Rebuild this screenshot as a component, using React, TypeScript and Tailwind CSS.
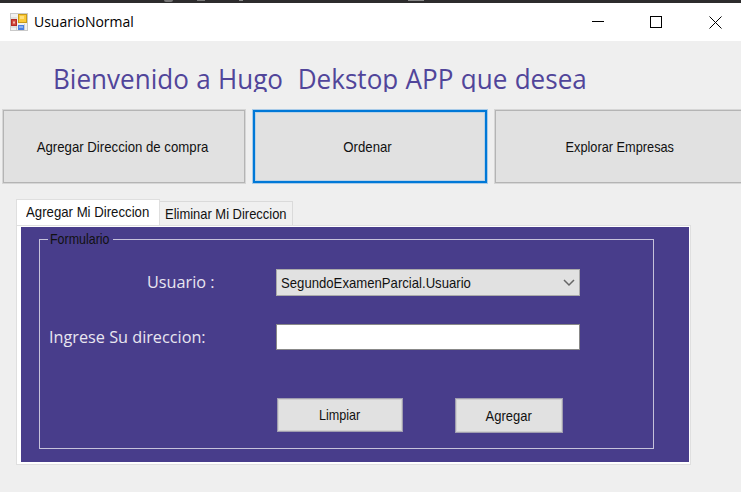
import type { ReactNode } from "react";

const sans = "font-['Liberation_Sans',sans-serif]";
const humanist = "font-['Open_Sans','Noto_Sans',sans-serif]";

function Button({ className, text, children }: { className: string; text: string; children: ReactNode }) {
  return (
    <button className={`flex shrink-0 items-center justify-center bg-[#e1e1e1] text-[15px] leading-[18px] text-[#111] ${sans} ${className}`}>
      <span className={`block whitespace-nowrap ${text}`}>{children}</span>
    </button>
  );
}

function FormIcon() {
  return (
    <svg width="18" height="18" viewBox="0 0 18 18" className="shrink-0">
      <rect x="0.5" y="0.5" width="17" height="17" fill="#f1f1f1" stroke="#c9c9c9" />
      <path d="M1 5h6M6.5 11v6M14.5 11v6M1 14h5" stroke="#cfcfcf" />
      <rect x="1" y="6" width="6" height="7" fill="#b52a24" />
      <rect x="2" y="7" width="4" height="5" fill="#cf463c" />
      <rect x="3" y="8.5" width="2" height="2" fill="#f3b5aa" />
      <rect x="8" y="1" width="9" height="9" fill="#c79a18" />
      <rect x="9" y="2" width="7" height="7" fill="#fbc938" />
      <rect x="10" y="3" width="4" height="3" fill="#ffe07a" />
      <rect x="8" y="12" width="6" height="5" fill="#4a7fe0" />
      <rect x="9" y="13" width="4" height="2" fill="#86b0f5" />
    </svg>
  );
}

function TitleBar() {
  return (
    <header className="flex h-[38px] items-center bg-white pl-[10px]">
      <FormIcon />
      <span className={`ml-[6px] w-[110px] origin-left scale-x-[0.965] whitespace-nowrap text-[14.5px] leading-5 text-black ${humanist}`}>UsuarioNormal</span>
      <svg width="131" height="14" viewBox="0 0 131 14" className="ml-auto mr-[19px]" fill="none" stroke="#000" shapeRendering="crispEdges">
        <path d="M1 6.5h12" />
        <rect x="59.5" y="1.5" width="11" height="11" />
        <path d="M118.5 1.5l12 12M130.5 1.5l-12 12" shapeRendering="auto" />
      </svg>
    </header>
  );
}

export default function App() {
  return (
    <div className="flex h-[492px] w-[741px] flex-col overflow-hidden bg-[#efefef]">
      <div className="flex h-[3px] items-start bg-[#2d2c2d]">
        <span className="ml-[164px] h-[2px] w-[9px] rounded-b-full bg-[#777]" />
        <span className="ml-[24px] h-px w-[8px] bg-[#777]" />
        <span className="ml-[34px] h-px w-[4px] bg-[#888]" />
        <span className="ml-[165px] h-px w-[16px] bg-[#888]" />
      </div>
      <TitleBar />
      <main className="flex flex-1 flex-col">
        <h1 className={`ml-[53px] mt-[16px] h-[35px] w-[660px] origin-left scale-x-[0.965] overflow-hidden whitespace-pre text-[27px] leading-[43px] text-[#51459a] [word-spacing:0.6px] ${humanist}`}>
          Bienvenido a Hugo  Dekstop APP que desea
        </h1>
        <div className="mt-[18px] flex gap-[8px] pl-[3px]">
          <Button className="h-[73px] w-[242px] border border-[#b4b4b4] pr-[3px] shadow-[0_0_0_1px_#d6d6d6]" text="scale-x-[0.88]">Agregar Direccion de compra</Button>
          <Button className="h-[73px] w-[234px] border-2 border-[#0078d7] pr-[4px] shadow-[0_0_0_1px_#a9cbe8,inset_0_0_0_1px_#b9d2e6]" text="scale-x-[0.88]">Ordenar</Button>
          <Button className="h-[73px] w-[250px] border border-[#b4b4b4] pr-px shadow-[0_0_0_1px_#d6d6d6]" text="scale-x-[0.85]">Explorar Empresas</Button>
        </div>
        <div className={`mt-[16px] flex h-[26px] items-end pl-[16px] text-[15px] leading-[18px] text-[#111] ${sans}`}>
          <div className="z-10 h-[26px] w-[144px] border-x border-t border-[#dfdfdf] bg-white pl-[9px] pt-[3px]">
            <span className="block origin-left scale-x-[0.88] whitespace-nowrap">Agregar Mi Direccion</span>
          </div>
          <div className="h-[24px] w-[133px] border-r border-t border-[#dadada] bg-[#f0f0f0] pl-[5px] pt-[3px]">
            <span className="block origin-left scale-x-[0.863] whitespace-nowrap">Eliminar Mi Direccion</span>
          </div>
        </div>
        <section className="ml-[16px] h-[240px] w-[675px] border border-[#dfdfdf] bg-white pb-[2px] pl-[4px] pr-[1px] pt-px">
          <div className="h-full bg-[#483d8b] pl-[18px] pt-[4px]">
            <fieldset className="h-[218px] w-[615px]">
              <div className={`flex h-[16px] items-center text-[15px] leading-4 text-[#111] ${sans}`}>
                <span className="h-[8px] w-[9px] self-end border-l border-t border-[#c6c2db]" />
                <span className="ml-[2px] w-[60px] origin-left scale-x-[0.83] whitespace-nowrap">Formulario</span>
                <span className="ml-[3px] h-[8px] flex-1 self-end border-r border-t border-[#c6c2db]" />
              </div>
              <div className="h-[202px] border-x border-b border-[#c6c2db]">
                <div className={`flex h-[53px] items-end text-[17px] leading-6 text-[#e8e6f0] ${humanist}`}>
                  <span className="ml-[107px] w-[129px] origin-left scale-x-[0.955] whitespace-nowrap pb-[6px]">Usuario :</span>
                  <div className={`mb-[4px] flex h-[27px] w-[304px] items-center border border-[#aaa] bg-[#e1e1e1] pl-[4px] text-[15px] leading-[18px] text-[#111] ${sans}`}>
                    <span className="origin-left scale-x-[0.876] whitespace-nowrap">SegundoExamenParcial.Usuario</span>
                    <svg width="12" height="8" viewBox="0 0 12 8" className="ml-auto mr-[4px]" fill="none" stroke="#666" strokeWidth="1.5"><path d="M1 1l5 5 5-5" /></svg>
                  </div>
                </div>
                <div className={`flex h-[54px] items-end text-[17px] leading-6 text-[#e8e6f0] ${humanist}`}>
                  <span className="ml-[9px] w-[227px] origin-left scale-x-[0.955] whitespace-nowrap pb-[5px]">Ingrese Su direccion:</span>
                  <div className="mb-[4px] h-[26px] w-[304px] border border-[#888] bg-white" />
                </div>
                <div className="flex items-start pl-[237px] pt-[44px]">
                  <Button className="h-[34px] w-[126px] border border-[#a09db0] shadow-[inset_0_0_0_1px_#cfcfcf]" text="scale-x-[0.84]">Limpiar</Button>
                  <Button className="ml-[52px] h-[35px] w-[108px] border border-[#a09db0] pr-px shadow-[inset_0_0_0_1px_#cfcfcf]" text="scale-x-[0.865]">Agregar</Button>
                </div>
              </div>
            </fieldset>
          </div>
        </section>
      </main>
    </div>
  );
}
